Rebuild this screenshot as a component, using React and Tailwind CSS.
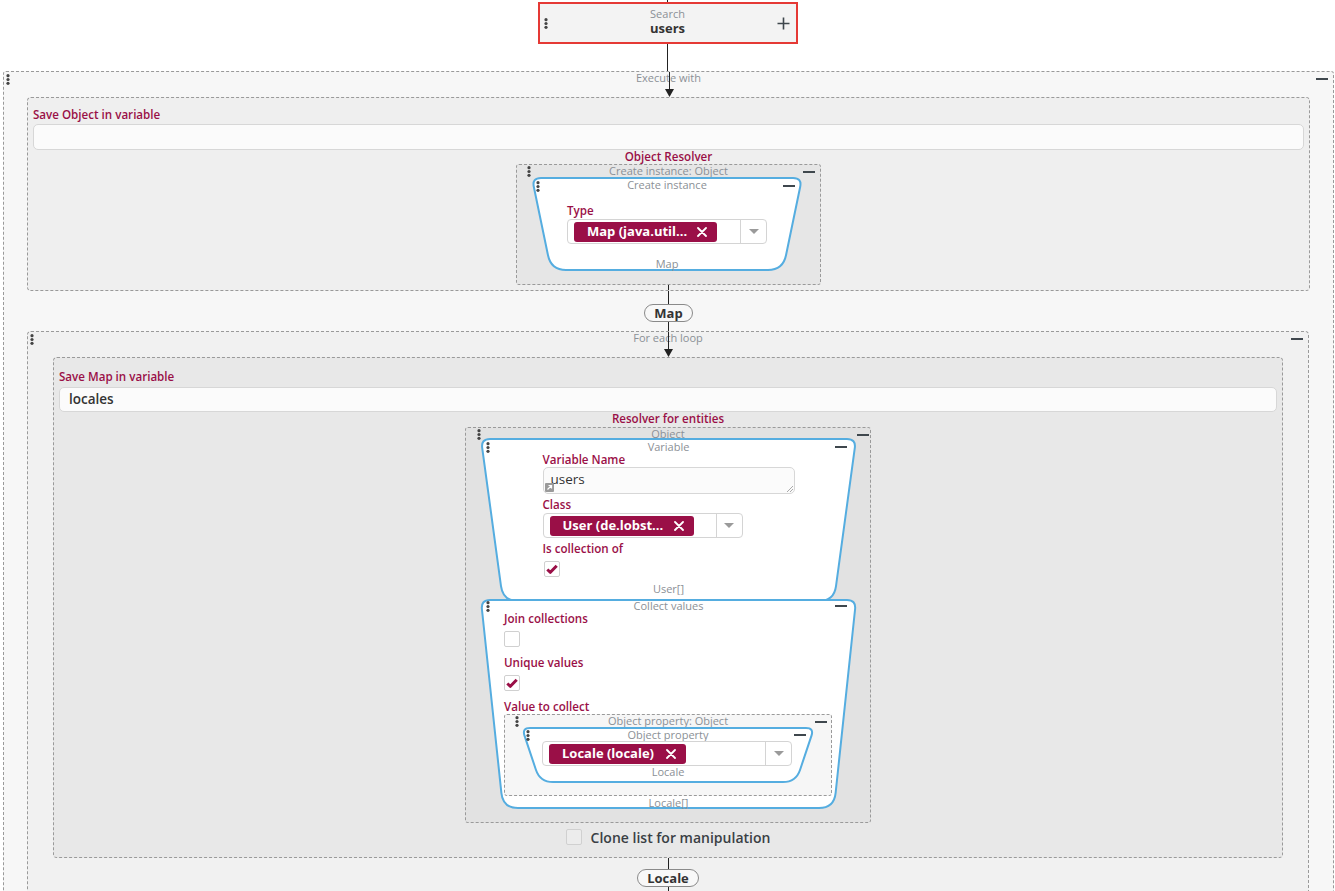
import React from 'react';

const CRIMSON = '#9a0f47';
const LABEL = 'text-[11.6px] leading-[14px] font-semibold text-[#9a0f47]';
const TITLE = 'text-[11px] leading-[12px] text-[#8b9096] text-center';

function Dots({ className = '' }) {
  return (
    <svg width="4" height="11" viewBox="0 0 4 11" className={className}>
      <circle cx="2" cy="1.7" r="1.6" fill="#444" />
      <circle cx="2" cy="5.5" r="1.6" fill="#444" />
      <circle cx="2" cy="9.3" r="1.6" fill="#444" />
    </svg>
  );
}

function Minus({ className = '' }) {
  return <div className={`w-[12px] h-[2px] bg-[#3f474d] ${className}`} />;
}

function Caret() {
  return (
    <svg width="10" height="6" viewBox="0 0 10 6">
      <path d="M0 0 L10 0 L5 5 Z" fill="#9a9a9a" />
    </svg>
  );
}

function XIcon() {
  return (
    <svg width="10" height="10" viewBox="0 0 10 10">
      <path d="M1 1 L9 9 M9 1 L1 9" stroke="#fff" strokeWidth="1.8" strokeLinecap="round" />
    </svg>
  );
}

function Check({ checked }) {
  return (
    <div className="w-[16px] h-[16px] bg-white border border-[#d0d0d0] rounded-[2px] flex items-center justify-center">
      {checked && (
        <svg width="12" height="10" viewBox="0 0 12 10">
          <path d="M1.3 5.5 L4.4 8.3 L10.7 1.8" stroke={CRIMSON} strokeWidth="3" fill="none" strokeLinejoin="round" />
        </svg>
      )}
    </div>
  );
}

function trapPath(w, h, inset, rt, rb) {
  const pts = [[1, 1], [w - 1, 1], [w - 1 - inset, h - 1], [1 + inset, h - 1]];
  const rs = [rt, rt, rb, rb];
  let d = '';
  pts.forEach((p, i) => {
    const a = pts[(i + 3) % 4];
    const b = pts[(i + 1) % 4];
    const r = rs[i];
    const ua = [a[0] - p[0], a[1] - p[1]];
    const la = Math.hypot(ua[0], ua[1]);
    const ub = [b[0] - p[0], b[1] - p[1]];
    const lb = Math.hypot(ub[0], ub[1]);
    const s = [p[0] + (ua[0] / la) * r, p[1] + (ua[1] / la) * r];
    const e = [p[0] + (ub[0] / lb) * r, p[1] + (ub[1] / lb) * r];
    d += `${i === 0 ? 'M' : 'L'}${s[0].toFixed(1)} ${s[1].toFixed(1)} Q${p[0]} ${p[1]} ${e[0].toFixed(1)} ${e[1].toFixed(1)} `;
  });
  return d + 'Z';
}

function Trap({ w, h, inset, rt = 9, rb = 15, className = '', children }) {
  return (
    <div className={`relative shrink-0 ${className}`}>
      <svg width={w} height={h} className="absolute left-0 top-0">
        <path d={trapPath(w, h, inset, rt, rb)} fill="#fff" stroke="#55ade0" strokeWidth="2" />
      </svg>
      <div className="relative h-full flex flex-col">{children}</div>
    </div>
  );
}

function Select({ className = '', label, tagWidth }) {
  return (
    <div className={`h-[25px] flex bg-white border border-[#d4d4d4] rounded-[4px] ${className}`}>
      <div className="flex-1 flex items-center pl-[6px]">
        <div className={`h-[20px] ${tagWidth} bg-[#9a0f47] rounded-[3px] pl-[13px] pr-[10px] flex items-center justify-between`}>
          <span className="text-[13px] font-bold text-white leading-none whitespace-nowrap">{label}</span>
          <XIcon />
        </div>
      </div>
      <div className="w-[26px] border-l border-[#d4d4d4] flex items-center justify-center">
        <Caret />
      </div>
    </div>
  );
}

function Line({ h }) {
  return <div className={`w-px shrink-0 ${h} bg-[#222] mx-auto`} />;
}

function ArrowHeader({ title }) {
  return (
    <div className="relative h-[25px]">
      <div className="absolute left-1/2 top-0 w-px h-[19px] bg-[#222]" />
      <svg width="9" height="8" viewBox="0 0 9 8" className="absolute left-[calc(50%-4px)] bottom-0">
        <path d="M0 0 L9 0 L4.5 8 Z" fill="#222" />
      </svg>
      <div className={TITLE}>{title}</div>
    </div>
  );
}

function Pill({ children }) {
  return (
    <div className="h-[18px] shrink-0 px-[9px] mx-auto border border-[#8a8a8a] rounded-full bg-[#f8f8f8] flex items-center text-[13px] font-bold text-[#333] leading-none">
      {children}
    </div>
  );
}

export default function App() {
  return (
    <div className="w-[1335px] h-[891px] overflow-hidden bg-white font-['Open_Sans',sans-serif] flex flex-col items-center">
      <Line h="h-[2px]" />
      {/* Search node */}
      <div className="relative shrink-0 w-[260px] h-[42px] border-2 border-[#e53935] bg-[#f3f3f3] flex flex-col items-center pt-[4px]">
        <div className="text-[11px] leading-[12px] text-[#8b9096]">Search</div>
        <div className="text-[13px] leading-[16px] font-bold text-[#333]">users</div>
        <Dots className="absolute left-[4px] top-[14px]" />
        <svg width="13" height="13" viewBox="0 0 13 13" className="absolute right-[6px] top-[13px]">
          <path d="M6.5 0.5 V12.5 M0.5 6.5 H12.5" stroke="#3f474d" strokeWidth="1.6" />
        </svg>
      </div>
      <Line h="h-[27px]" />

      {/* Execute with */}
      <div className="self-start shrink-0 ml-[3px] w-[1331px] border border-dashed border-[#9a9a9a] rounded-[3px] bg-[#f7f7f7] flex flex-col pb-[30px]">
        <div className="relative">
          <ArrowHeader title="Execute with" />
          <Dots className="absolute left-[2px] top-[2px]" />
          <Minus className="absolute right-[5px] top-[6px]" />
        </div>

        <div className="px-[23px]">
          {/* Save Object in variable */}
          <div className="border border-dashed border-[#9a9a9a] rounded-[4px] bg-[#efefef] px-[5px] pt-[10px] flex flex-col">
            <div className={LABEL}>Save Object in variable</div>
            <div className="mt-[2px] h-[26px] bg-[#fbfbfb] border border-[#d7d7d7] rounded-[5px]" />
            <div className={`${LABEL} text-center`}>Object Resolver</div>
            <div className="relative mx-auto w-[305px] h-[121px] border border-dashed border-[#9a9a9a] rounded-[3px] bg-[#e6e6e6] flex flex-col">
              <div className={`${TITLE} h-[12px]`}>Create instance: Object</div>
              <Dots className="absolute left-[10px] top-[1px]" />
              <Minus className="absolute right-[5px] top-[6px]" />
              <Trap w={272} h={94} inset={19} className="ml-[14px] w-[272px] h-[94px]">
                <div className={`${TITLE} pt-[2px]`}>Create instance</div>
                <Dots className="absolute left-[5px] top-[4px]" />
                <Minus className="absolute right-[8px] top-[8px]" />
                <div className="w-[200px] mx-auto mt-[13px]">
                  <div className={LABEL}>Type</div>
                  <Select className="mt-[1px]" label="Map (java.util..." tagWidth="w-[143px]" />
                </div>
                <div className={`${TITLE} mt-[14px]`}>Map</div>
              </Trap>
            </div>
            <Line h="h-[5px]" />
          </div>
        </div>

        <Line h="h-[13px]" />
        <Pill>Map</Pill>
        <Line h="h-[9px]" />

        {/* For each loop */}
        <div className="ml-[23px] w-[1282px] border border-dashed border-[#9a9a9a] rounded-[4px] bg-[#f1f1f1] flex flex-col">
          <div className="relative">
            <ArrowHeader title="For each loop" />
            <Dots className="absolute left-[2px] top-[2px]" />
            <Minus className="absolute right-[5px] top-[6px]" />
          </div>
          <div className="px-[25px]">
            {/* Save Map in variable */}
            <div className="border border-dashed border-[#9a9a9a] rounded-[4px] bg-[#e8e8e8] px-[5px] pt-[12px] flex flex-col">
              <div className={LABEL}>Save Map in variable</div>
              <div className="mt-[3px] h-[25px] bg-[#fbfbfb] border border-[#d7d7d7] rounded-[5px] flex items-center px-[9px] text-[13.5px] font-semibold text-[#333]">
                locales
              </div>
              <div className={`${LABEL} text-center`}>Resolver for entities</div>
              <div className="relative mt-[1px] mx-auto w-[406px] border border-dashed border-[#9a9a9a] rounded-[3px] bg-[#e2e2e2] flex flex-col px-[14px] pb-[13px]">
                <div className={`${TITLE} h-[10px] leading-[11px]`}>Object</div>
                <Dots className="absolute left-[11px] top-[1px]" />
                <Minus className="absolute right-[1px] top-[6px]" />

                {/* Variable */}
                <Trap w={377} h={164} inset={22} className="w-[377px] h-[164px]">
                  <div className={`${TITLE} pt-[3px]`}>Variable</div>
                  <Dots className="absolute left-[6px] top-[4px]" />
                  <Minus className="absolute right-[10px] top-[8px]" />
                  <div className="w-[252px] mx-auto flex flex-col">
                    <div className={LABEL}>Variable Name</div>
                    <div className="relative h-[27px] bg-[#fbfbfb] border border-[#d7d7d7] rounded-[5px] px-[7px] text-[13.5px] leading-[23px] text-[#333]">
                      users
                      <div className="absolute left-[1px] bottom-[1px] w-[9px] h-[9px] bg-[#9a9a9a] rounded-[1px] flex items-center justify-center">
                        <svg width="7" height="7" viewBox="0 0 7 7">
                          <path d="M1.5 5.5 L5.5 1.5 M2.5 1.5 H5.5 V4.5" stroke="#fff" strokeWidth="1.2" fill="none" />
                        </svg>
                      </div>
                      <svg width="7" height="7" viewBox="0 0 7 7" className="absolute right-[1px] bottom-[1px]">
                        <path d="M7 1 L1 7 M7 4 L4 7" stroke="#aaa" strokeWidth="1" />
                      </svg>
                    </div>
                    <div className={`${LABEL} mt-[4px]`}>Class</div>
                    <Select className="mt-[1px] w-[200px]" label="User (de.lobst..." tagWidth="w-[144px]" />
                    <div className={`${LABEL} mt-[4px]`}>Is collection of</div>
                    <div className="mt-[5px] ml-[1px]">
                      <Check checked />
                    </div>
                  </div>
                  <div className={`${TITLE} mt-[6px]`}>User[]</div>
                </Trap>

                {/* Collect values */}
                <Trap w={377} h={210} inset={22} className="-mt-[3px] w-[377px] h-[210px]">
                  <div className={`${TITLE} pt-[1px]`}>Collect values</div>
                  <Dots className="absolute left-[6px] top-[2px]" />
                  <Minus className="absolute right-[10px] top-[6px]" />
                  <div className="px-[24px] flex flex-col">
                    <div className={LABEL}>Join collections</div>
                    <div className="mt-[5px]"><Check /></div>
                    <div className={`${LABEL} mt-[9px]`}>Unique values</div>
                    <div className="mt-[5px]"><Check checked /></div>
                    <div className={`${LABEL} mt-[9px]`}>Value to collect</div>
                    <div className="relative w-[328px] h-[82px] border border-dashed border-[#9a9a9a] rounded-[3px] bg-[#f6f6f6] flex flex-col">
                      <div className={`${TITLE} h-[12px]`}>Object property: Object</div>
                      <Dots className="absolute left-[10px] top-[1px]" />
                      <Minus className="absolute right-[4px] top-[6px]" />
                      <Trap w={294} h={56} inset={18} rt={8} rb={13} className="ml-[16px] w-[294px] h-[56px]">
                        <div className={`${TITLE} pt-[2px]`}>Object property</div>
                        <Dots className="absolute left-[5px] top-[3px]" />
                        <Minus className="absolute right-[9px] top-[7px]" />
                        <Select className="ml-[21px] w-[250px]" label="Locale (locale)" tagWidth="w-[137px]" />
                        <div className={TITLE}>Locale</div>
                      </Trap>
                    </div>
                  </div>
                  <div className={`${TITLE} mt-[1px]`}>Locale[]</div>
                </Trap>
              </div>

              <div className="h-[34px] pt-[6px] flex justify-center">
                <div className="h-[16px] flex items-center gap-[9px]">
                  <div className="w-[16px] h-[16px] border border-[#d0d0d0] rounded-[2px] bg-[#ececec]" />
                  <span className="text-[14px] font-semibold text-[#3a3f44]">Clone list for manipulation</span>
                </div>
              </div>
            </div>
          </div>
          <Line h="h-[11px]" />
          <Pill>Locale</Pill>
          <Line h="h-[40px]" />
        </div>
      </div>
    </div>
  );
}
